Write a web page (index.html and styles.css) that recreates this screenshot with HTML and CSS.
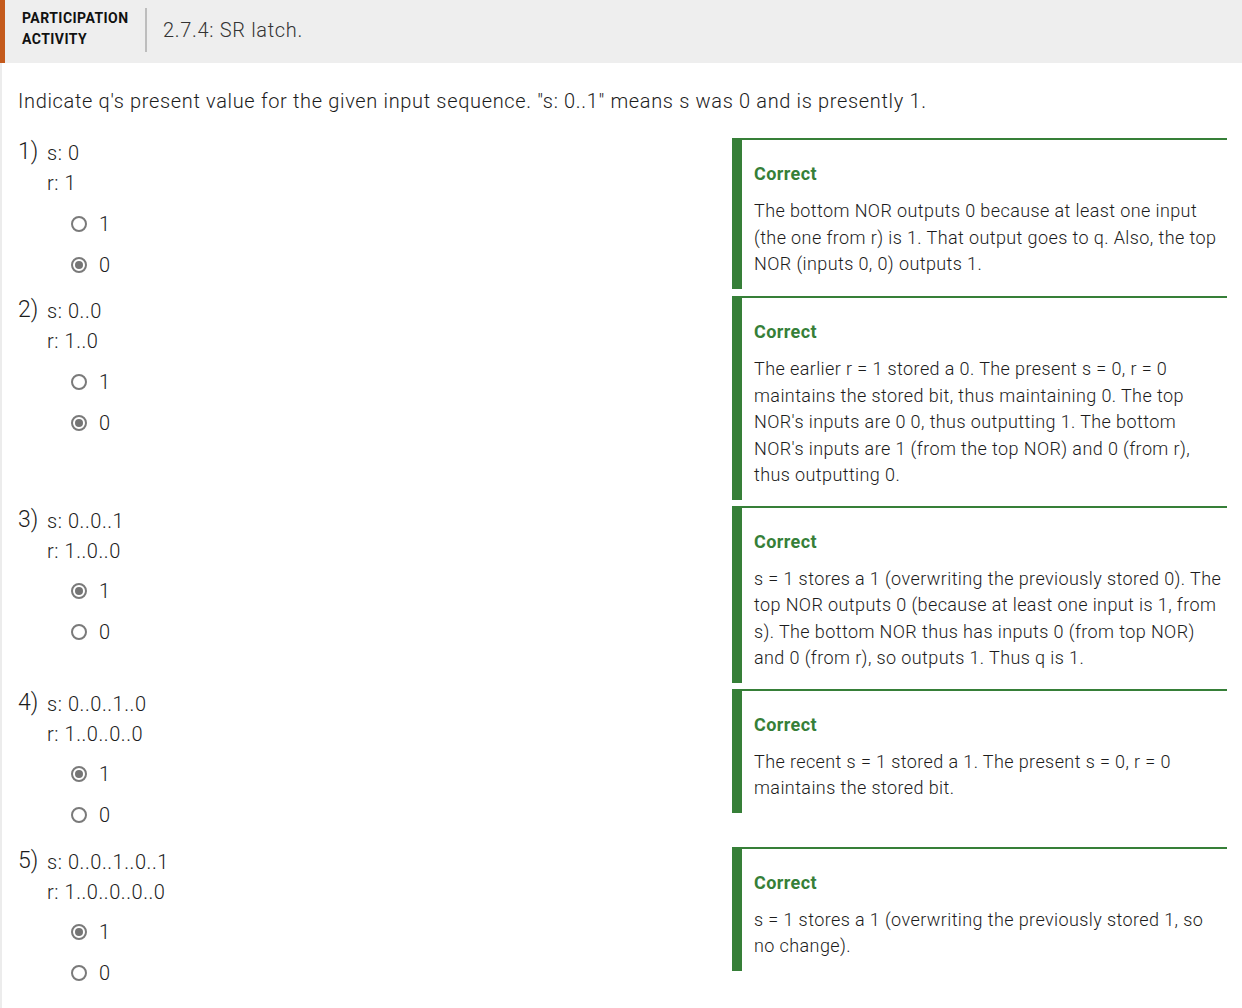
FILE: index.html
```html
<!DOCTYPE html>
<html lang="en">
<head>
<meta charset="utf-8">
<title>2.7.4: SR latch.</title>
<link rel="stylesheet" href="styles.css">
</head>
<body>
<div class="activity">
  <header class="act-header">
    <div class="act-label">PARTICIPATION<br>ACTIVITY</div>
    <div class="act-sep"></div>
    <div class="act-title">2.7.4: SR latch.</div>
  </header>
  <main class="act-body">
    <p class="instructions">Indicate q's present value for the given input sequence. "s: 0..1" means s was 0 and is presently 1.</p>

    <div class="q-row">
      <div class="q-left">
        <div class="q-head">
          <span class="q-num">1)</span>
          <div class="q-text"><div>s: 0</div><div>r: 1</div></div>
        </div>
        <div class="choices">
          <label class="choice"><span class="radio"></span><span>1</span></label>
          <label class="choice"><span class="radio checked"></span><span>0</span></label>
        </div>
      </div>
      <div class="feedback">
        <div class="fb-title">Correct</div>
        <div class="fb-text">The bottom NOR outputs 0 because at least one input (the one from r) is 1. That output goes to q. Also, the top NOR (inputs 0, 0) outputs 1.</div>
      </div>
    </div>

    <div class="q-row">
      <div class="q-left">
        <div class="q-head">
          <span class="q-num">2)</span>
          <div class="q-text"><div>s: 0..0</div><div>r: 1..0</div></div>
        </div>
        <div class="choices">
          <label class="choice"><span class="radio"></span><span>1</span></label>
          <label class="choice"><span class="radio checked"></span><span>0</span></label>
        </div>
      </div>
      <div class="feedback">
        <div class="fb-title">Correct</div>
        <div class="fb-text">The earlier r = 1 stored a 0. The present s = 0, r = 0 maintains the stored bit, thus maintaining 0. The top NOR's inputs are 0 0, thus outputting 1. The bottom NOR's inputs are 1 (from the top NOR) and 0 (from r), thus outputting 0.</div>
      </div>
    </div>

    <div class="q-row">
      <div class="q-left">
        <div class="q-head">
          <span class="q-num">3)</span>
          <div class="q-text"><div>s: 0..0..1</div><div>r: 1..0..0</div></div>
        </div>
        <div class="choices">
          <label class="choice"><span class="radio checked"></span><span>1</span></label>
          <label class="choice"><span class="radio"></span><span>0</span></label>
        </div>
      </div>
      <div class="feedback">
        <div class="fb-title">Correct</div>
        <div class="fb-text">s = 1 stores a 1 (overwriting the previously stored 0). The top NOR outputs 0 (because at least one input is 1, from s). The bottom NOR thus has inputs 0 (from top NOR) and 0 (from r), so outputs 1. Thus q is 1.</div>
      </div>
    </div>

    <div class="q-row">
      <div class="q-left">
        <div class="q-head">
          <span class="q-num">4)</span>
          <div class="q-text"><div>s: 0..0..1..0</div><div>r: 1..0..0..0</div></div>
        </div>
        <div class="choices">
          <label class="choice"><span class="radio checked"></span><span>1</span></label>
          <label class="choice"><span class="radio"></span><span>0</span></label>
        </div>
      </div>
      <div class="feedback">
        <div class="fb-title">Correct</div>
        <div class="fb-text">The recent s = 1 stored a 1. The present s = 0, r = 0 maintains the stored bit.</div>
      </div>
    </div>

    <div class="q-row">
      <div class="q-left">
        <div class="q-head">
          <span class="q-num">5)</span>
          <div class="q-text"><div>s: 0..0..1..0..1</div><div>r: 1..0..0..0..0</div></div>
        </div>
        <div class="choices">
          <label class="choice"><span class="radio checked"></span><span>1</span></label>
          <label class="choice"><span class="radio"></span><span>0</span></label>
        </div>
      </div>
      <div class="feedback">
        <div class="fb-title">Correct</div>
        <div class="fb-text">s = 1 stores a 1 (overwriting the previously stored 1, so no change).</div>
      </div>
    </div>
  </main>
</div>
</body>
</html>
```

FILE: styles.css
```css
html, body {
  margin: 0;
  padding: 0;
  background: #ffffff;
}

body {
  font-family: Roboto, "Liberation Sans", Arial, sans-serif;
  color: #1c1c1c;
}

.activity {
  width: 1242px;
  min-height: 1008px;
}

.act-header {
  display: flex;
  align-items: center;
  height: 63px;
  background: #eeeeee;
  border-left: 5px solid #c45a1c;
  box-sizing: border-box;
  padding-left: 17px;
}

.act-label {
  font-weight: 700;
  font-size: 14px;
  line-height: 21px;
  letter-spacing: 0.45px;
  color: #111111;
  width: 123px;
  margin-top: -6px;
}

.act-sep {
  width: 2px;
  height: 44px;
  background: #bdbdbd;
  margin-top: -3px;
}

.act-title {
  margin-left: 16px;
  font-size: 20px;
  font-weight: 300;
  letter-spacing: 0.68px;
  color: #333333;
  margin-top: -3px;
}

.act-body {
  border-left: 2px solid #ececec;
  padding: 24px 15px 20px 16px;
  min-height: 900px;
}

.instructions {
  margin: 0 0 23px 0;
  font-size: 20px;
  line-height: 28px;
  font-weight: 300;
  letter-spacing: 0.66px;
  color: #1c1c1c;
}

.q-row {
  display: flex;
  align-items: flex-start;
  margin-bottom: 6px;
}

.q-left {
  flex: 1;
  padding-bottom: 5px;
}

.q-head {
  display: flex;
  align-items: flex-start;
}

.q-num {
  width: 29px;
  font-size: 23px;
  line-height: 28px;
  font-weight: 300;
}

.q-text {
  font-size: 20px;
  line-height: 30px;
  font-weight: 300;
  letter-spacing: 0.56px;
}

.choices {
  margin-top: 5px;
  padding-left: 53px;
}

.choice {
  display: flex;
  align-items: center;
  height: 41px;
  font-size: 20px;
  font-weight: 300;
}

.radio {
  width: 16px;
  height: 16px;
  box-sizing: border-box;
  border: 2px solid #7a7a7a;
  border-radius: 50%;
  margin-right: 12px;
  display: flex;
  align-items: center;
  justify-content: center;
  background: #ffffff;
}

.radio.checked::after {
  content: "";
  width: 8px;
  height: 8px;
  border-radius: 50%;
  background: #757575;
}

.feedback {
  width: 495px;
  box-sizing: border-box;
  border-left: 10px solid #367f38;
  border-top: 2px solid #367f38;
  padding: 21px 4px 11px 12px;
}

.fb-title {
  font-size: 18px;
  line-height: 26px;
  font-weight: 700;
  letter-spacing: 0.4px;
  color: #367f38;
  margin-bottom: 11px;
}

.fb-text {
  font-size: 18px;
  line-height: 26.5px;
  font-weight: 300;
  letter-spacing: 0.4px;
  color: #1c1c1c;
}
```
